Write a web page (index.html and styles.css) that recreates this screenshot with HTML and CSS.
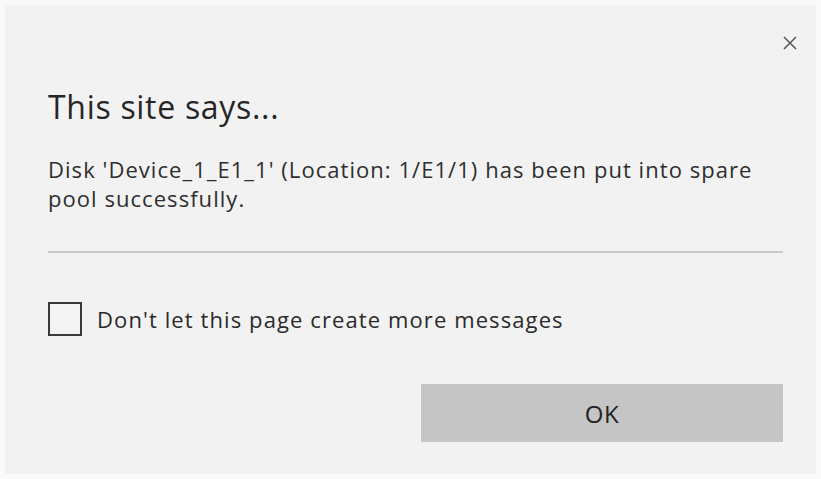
FILE: index.html
```html
<!DOCTYPE html>
<html lang="en">
<head>
<meta charset="utf-8">
<title>This site says...</title>
<link rel="stylesheet" href="styles.css">
</head>
<body>
<div class="dialog" role="alertdialog" aria-labelledby="dlg-title">
  <div class="dialog-head">
    <button class="close" aria-label="Close">
      <svg viewBox="0 0 16 16" width="16" height="16" aria-hidden="true">
        <path d="M2 2 L14 14 M14 2 L2 14" stroke="#555" stroke-width="1.5" fill="none"/>
      </svg>
    </button>
  </div>
  <h1 class="title" id="dlg-title">This site says...</h1>
  <p class="message">Disk 'Device_1_E1_1' (Location: 1/E1/1) has been put into spare pool successfully.</p>
  <div class="rule"></div>
  <label class="suppress">
    <input type="checkbox" class="suppress-input">
    <span class="box"></span>
    <span class="suppress-text">Don't let this page create more messages</span>
  </label>
  <div class="actions">
    <button class="ok">OK</button>
  </div>
</div>
</body>
</html>
```

FILE: styles.css
```css
html, body {
  margin: 0;
  height: 100%;
}

body {
  background: #fafafa;
  font-family: "Open Sans", "Noto Sans", "DejaVu Sans", sans-serif;
  color: #2a2a2a;
}

.dialog {
  box-sizing: border-box;
  height: 100%;
  border: 5px solid #fafafa;
  background: #f2f2f2;
  padding: 0 33px 0 43px;
}

.dialog-head {
  display: flex;
  justify-content: flex-end;
  padding-top: 30px;
  margin-right: -15px;
}

.close {
  width: 16px;
  height: 16px;
  padding: 0;
  border: 0;
  background: none;
  display: block;
}

.close svg {
  display: block;
}

.title {
  margin: 36px 0 0;
  font-size: 32px;
  line-height: 40px;
  font-weight: 400;
  letter-spacing: 0.7px;
  color: #262626;
}

.message {
  margin: 28px 0 0;
  font-size: 22px;
  line-height: 29px;
  letter-spacing: 1.05px;
  color: #2e2e2e;
}

.rule {
  margin-top: 38px;
  height: 2px;
  background: #c9c9c9;
}

.suppress {
  margin-top: 49px;
  display: flex;
  align-items: center;
  gap: 15px;
  height: 34px;
  font-size: 22px;
  letter-spacing: 1.1px;
  color: #2a2a2a;
}

.suppress-input {
  position: absolute;
  opacity: 0;
  width: 0;
  height: 0;
  margin: 0;
}

.box {
  box-sizing: border-box;
  width: 34px;
  height: 34px;
  border: 2px solid #3a3a3a;
  background: #f4f4f4;
  flex: none;
}

.actions {
  margin-top: 48px;
  display: flex;
  justify-content: flex-end;
}

.ok {
  width: 362px;
  height: 58px;
  border: 0;
  background: #c5c5c5;
  font-family: inherit;
  font-size: 24px;
  letter-spacing: 0.5px;
  color: #222;
}
```
